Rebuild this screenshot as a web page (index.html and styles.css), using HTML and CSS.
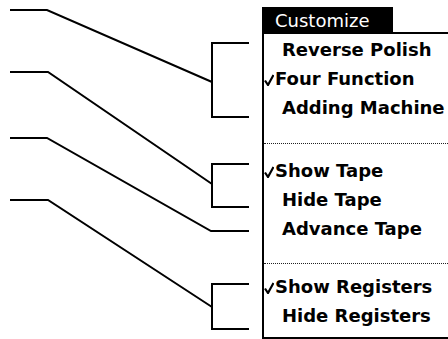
FILE: index.html
```html
<!DOCTYPE html>
<html lang="en">
<head>
    <meta charset="UTF-8">
    <meta name="viewport" content="width=device-width, initial-scale=1.0">
    <title>Customize menu</title>
    <link rel="stylesheet" href="styles.css">
</head>
<body>
    <svg class="callouts" width="262" height="339" viewBox="0 0 262 339">
        <g fill="none" stroke="#000" stroke-width="2">
            <polyline points="10,10 47,10 212,82"/>
            <polyline points="249,43 212,43 212,117 249,117"/>
            <polyline points="10,72 48,72 212,184"/>
            <polyline points="249,164 212,164 212,207 249,207"/>
            <polyline points="10,138 47,138 211,231 249,231"/>
            <polyline points="10,200 48,200 212,307"/>
            <polyline points="249,284 212,284 212,329 249,329"/>
        </g>
    </svg>

    <div class="menu">
        <div class="menu-title">Customize</div>
        <div class="menu-box">
            <div class="item">Reverse Polish</div>
            <div class="item checked"><svg class="check" width="10" height="12" viewBox="0 0 10 12"><polyline points="1,6.5 4,11 9.5,1" fill="none" stroke="#000" stroke-width="2.2"/></svg>Four Function</div>
            <div class="item">Adding Machine</div>

            <div class="sep sep-1"></div>

            <div class="item checked"><svg class="check" width="10" height="12" viewBox="0 0 10 12"><polyline points="1,6.5 4,11 9.5,1" fill="none" stroke="#000" stroke-width="2.2"/></svg>Show Tape</div>
            <div class="item">Hide Tape</div>
            <div class="item">Advance Tape</div>

            <div class="sep sep-2"></div>

            <div class="item checked"><svg class="check" width="10" height="12" viewBox="0 0 10 12"><polyline points="1,6.5 4,11 9.5,1" fill="none" stroke="#000" stroke-width="2.2"/></svg>Show Registers</div>
            <div class="item">Hide Registers</div>
        </div>
    </div>
</body>
</html>
```

FILE: styles.css
```css
body {
    margin: 0;
    width: 448px;
    height: 339px;
    overflow: hidden;
    background: #fff;
    color: #000;
    display: flex;
    font-family: "DejaVu Sans", sans-serif;
}

.callouts {
    flex: none;
    display: block;
}

.menu {
    flex: none;
    width: 200px;
    padding-top: 7px;
}

/* black tab on top of the menu */
.menu-title {
    width: 118px;
    height: 24px;
    padding: 2px 0 0 13px;
    background: #000;
    color: #fff;
    font-size: 18px;
    line-height: 24px;
}

.menu-box {
    border-top: 2px solid #000;
    border-left: 2px solid #000;
    border-bottom: 2px solid #000;
    margin-top: -1px;
    padding: 1px 0 7px 0;
}

.item {
    height: 29px;
    padding-left: 18px;
    font-size: 18px;
    font-weight: bold;
    line-height: 29px;
    white-space: nowrap;
}

.item.checked {
    padding-left: 0;
}

.check {
    display: inline-block;
    vertical-align: -1px;
    margin-right: 1px;
}

.sep {
    border-top: 1px dotted #222;
}

.sep-1 {
    margin: 21px 0 12px 0;
}

.sep-2 {
    margin: 20px 0 8px 0;
}
```
